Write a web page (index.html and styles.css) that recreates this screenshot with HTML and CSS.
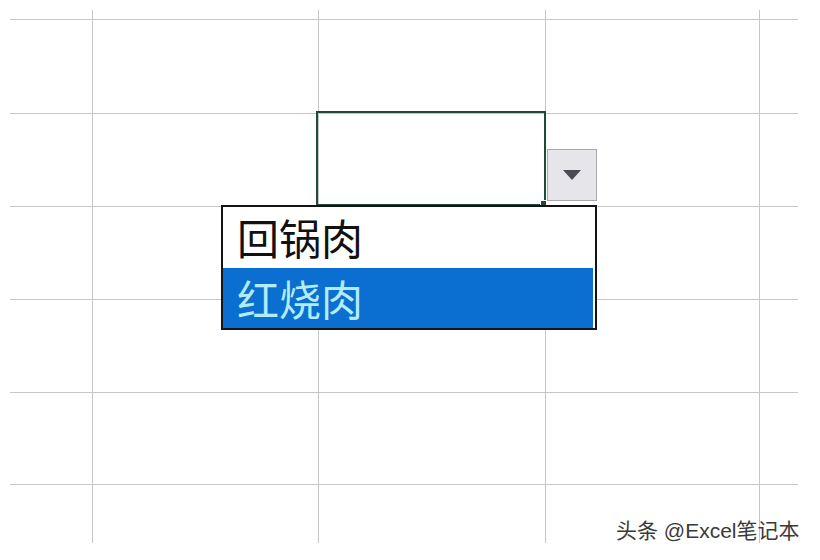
FILE: index.html
```html
<!DOCTYPE html>
<html lang="zh-CN">
<head>
<meta charset="utf-8">
<title>下拉列表</title>
<link rel="stylesheet" href="styles.css">
</head>
<body>
<div class="sheet">
  <div class="c"></div><div class="c"></div><div class="c"></div><div class="c"></div><div class="c last-col"></div>
  <div class="c"></div><div class="c"></div><div class="c"></div><div class="c"></div><div class="c last-col"></div>
  <div class="c"></div><div class="c"></div><div class="c"></div><div class="c"></div><div class="c last-col"></div>
  <div class="c"></div><div class="c"></div><div class="c"></div><div class="c"></div><div class="c last-col"></div>
  <div class="c"></div><div class="c"></div><div class="c"></div><div class="c"></div><div class="c last-col"></div>
  <div class="c"></div><div class="c"></div><div class="c"></div><div class="c"></div><div class="c last-col"></div>
  <div class="c last-row"></div><div class="c last-row"></div><div class="c last-row"></div><div class="c last-row"></div><div class="c last-row last-col"></div>

  <div class="active-cell"><span class="fill-handle"></span></div>
  <div class="drop-btn">
    <svg width="18" height="10" viewBox="0 0 18 10"><polygon points="0,0 18,0 9,10" fill="#4b4b55"/></svg>
  </div>
  <div class="listbox">
    <div class="item">回锅肉</div>
    <div class="item selected">红烧肉</div>
  </div>
  <div class="watermark">头条 @Excel笔记本</div>
</div>
</body>
</html>
```

FILE: styles.css
```css
html, body {
  margin: 0;
  padding: 0;
  background: #ffffff;
}
body {
  font-family: "Noto Sans CJK SC", "Noto Sans", sans-serif;
}
.sheet {
  position: relative;
  margin: 10px 0 0 10px;
  display: grid;
  grid-template-columns: 83px 226px 227px 214px 38px;
  grid-template-rows: 10px 94px 93px 93px 93px 92px 58px;
  width: 788px;
}
.c {
  box-sizing: border-box;
  border-right: 1px solid #c6c6c8;
  border-bottom: 1px solid #c6c6c8;
}
.c.last-col { border-right: none; }
.c.last-row { border-bottom: none; }

.active-cell {
  position: absolute;
  left: 306px;
  top: 101px;
  width: 230px;
  height: 95px;
  box-sizing: border-box;
  border: 2px solid #1d4b35;
}
.fill-handle {
  position: absolute;
  right: -3px;
  bottom: -3px;
  width: 7px;
  height: 7px;
  background: #1d4b35;
  border: 1px solid #ffffff;
  box-sizing: border-box;
}
.drop-btn {
  position: absolute;
  left: 537px;
  top: 139px;
  width: 50px;
  height: 52px;
  box-sizing: border-box;
  background: #e5e5ea;
  border: 1px solid #a8a8ae;
  display: flex;
  align-items: center;
  justify-content: center;
}
.listbox {
  position: absolute;
  left: 211px;
  top: 195px;
  width: 376px;
  height: 125px;
  box-sizing: border-box;
  border: 2px solid #141414;
  background: #ffffff;
  display: flex;
  flex-direction: column;
}
.item {
  height: 61px;
  padding-left: 14px;
  font-size: 42px;
  line-height: 60px;
  color: #111111;
  white-space: nowrap;
}
.item.selected {
  height: 60px;
  margin-right: 2px;
  background: #0b6fd1;
  color: #b2ecf7;
}
.watermark {
  position: absolute;
  left: 606px;
  top: 507px;
  font-family: "Liberation Sans", "Noto Sans CJK SC", sans-serif;
  font-size: 21px;
  line-height: 28px;
  color: #3a3a3a;
  white-space: nowrap;
}
```
